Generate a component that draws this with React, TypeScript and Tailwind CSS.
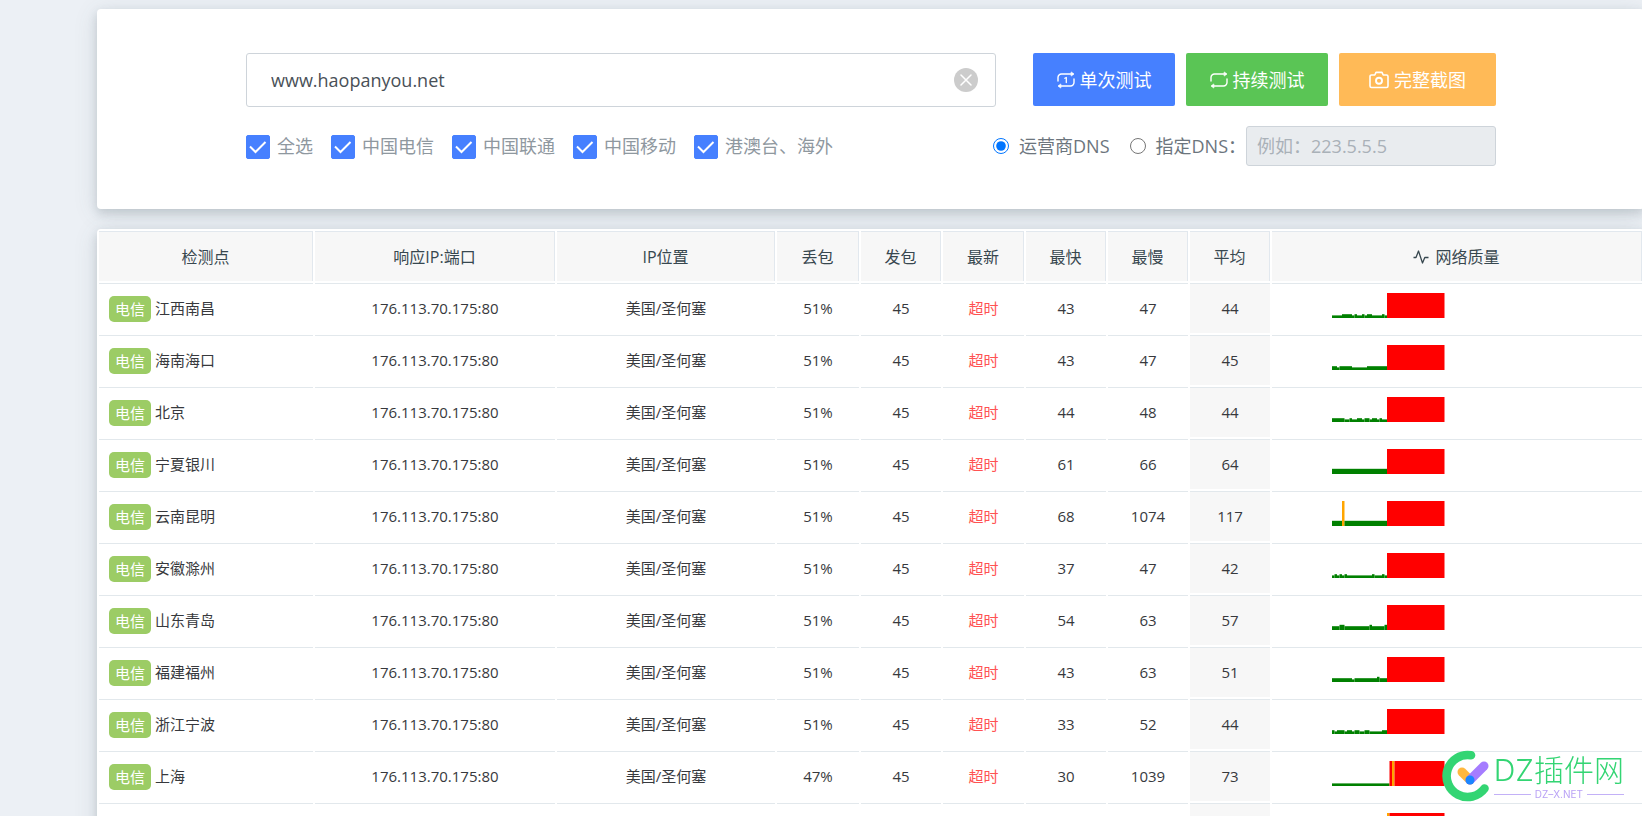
import { useState } from "react";

const carriers = ["全选", "中国电信", "中国联通", "中国移动", "港澳台、海外"];

// One character per probe: a/b/c are answered (low to high), o is slow, x is lost.
const levels: Record<string, { height: number; color: string }> = {
  a: { height: 2.6, color: "green" },
  b: { height: 3.8, color: "green" },
  c: { height: 5.2, color: "green" },
  o: { height: 25, color: "orange" },
  x: { height: 25, color: "red" },
};

const LOST = "xxxxxxxxxxxxxxxxxxxxxxx";

const rows = [
  { city: "江西南昌", loss: "51%", sent: 45, min: 43, max: 47, avg: 44, probes: "aaaabbbbabaababbaaaaba" + LOST },
  { city: "海南海口", loss: "51%", sent: 45, min: 43, max: 47, avg: 45, probes: "bbabbbbbaaaaaabbbbbbbb" + LOST },
  { city: "北京", loss: "51%", sent: 45, min: 44, max: 48, avg: 44, probes: "bbbbbaabaabbabbabbabaa" + LOST },
  { city: "宁夏银川", loss: "51%", sent: 45, min: 61, max: 66, avg: 64, probes: "cccccccccccccccccccccc" + LOST },
  { city: "云南昆明", loss: "51%", sent: 45, min: 68, max: 1074, avg: 117, probes: "ccccoccccccccccccccccc" + LOST },
  { city: "安徽滁州", loss: "51%", sent: 45, min: 37, max: 47, avg: 42, probes: "abababaaaaaaaaaabaaaba" + LOST },
  { city: "山东青岛", loss: "51%", sent: 45, min: 54, max: 63, avg: 57, probes: "bbbccbbbbbbbbbbcbbbbbc" + LOST },
  { city: "福建福州", loss: "51%", sent: 45, min: 43, max: 63, avg: 51, probes: "bbbbbbbbabbbbbbbbbcbbb" + LOST },
  { city: "浙江宁波", loss: "51%", sent: 45, min: 33, max: 52, avg: 44, probes: "babbbabbabbaabbaaaaabb" + LOST },
  { city: "上海", loss: "47%", sent: 45, min: 30, max: 1039, avg: 73, probes: "aaaaaaaaaaaaaaaaaaaaaaaxoxxxxxxxxxxxxxxxxxxxx" },
  { city: "江苏苏州", loss: "49%", sent: 45, min: 31, max: 1040, avg: 75, probes: "aaaaaaaaaaaaaaaaaaaaaaoxxxxxxxxxxxxxxxxxxxxxx" },
];

function QualityChart({ probes }: { probes: string }) {
  // equal neighbours become one bar, so no seams show between them
  const runs = [...probes.matchAll(/(.)\1*/g)];
  return (
    <svg width="250" height="25" viewBox="0 0 250 25" className="mx-auto block">
      {runs.map((run) => {
        const { height, color } = levels[run[1]];
        return <rect key={run.index} x={run.index * 2.5} y={25 - height} width={run[0].length * 2.5} height={height} fill={color} />;
      })}
    </svg>
  );
}

function RepeatIcon({ once = false }: { once?: boolean }) {
  return (
    <svg width="18" height="18" viewBox="0 0 18 18" fill="none" stroke="currentColor" strokeWidth="1.4" strokeLinecap="round" strokeLinejoin="round">
      <path d="M1 10V6.500a3.500 3.500 0 0 1 3.500-3.500H16" />
      <path d="M17 8v3.500a3.500 3.500 0 0 1-3.500 3.500H2" />
      <path d="M14.500 1.200l2.300 1.800-2.300 1.800zM3.500 13.200L1.200 15l2.300 1.800z" fill="currentColor" strokeWidth="0.800" />
      {once && <path d="M7.800 7.300l1.500-.8v5" strokeWidth="1.300" />}
    </svg>
  );
}

function CameraIcon() {
  return (
    <svg width="20" height="18" viewBox="0 0 20 18" fill="none" stroke="currentColor" strokeWidth="1.6" strokeLinejoin="round">
      <path d="M2.500 4h3.300l1.200-2.600h6L14.200 4h3.300a1.500 1.500 0 0 1 1.500 1.500v9.500a1.500 1.500 0 0 1-1.500 1.500h-15A1.500 1.500 0 0 1 1 15V5.500A1.500 1.500 0 0 1 2.500 4z" />
      <circle cx="10" cy="9.800" r="3" strokeWidth="1.900" />
    </svg>
  );
}

function PulseIcon() {
  return (
    <svg width="16" height="16" viewBox="0 0 16 16" fill="none" stroke="currentColor" strokeWidth="1.3" strokeLinejoin="round">
      <path d="M0.500 8.500H3L5.500 2l4 12 2.300-5.500h3.700" />
    </svg>
  );
}

function Watermark() {
  return (
    <div className="pointer-events-none fixed right-[18px] bottom-3.5 flex items-center font-['Inter','Noto_Sans_CJK_SC',sans-serif]">
      <svg width="52" height="52" viewBox="0 0 52 52" fill="none" strokeLinecap="round">
        <path d="M29 5.300A21 21 0 1 0 42.500 38.500" stroke="#33d573" strokeWidth="8.600" />
        <path d="M20 22l8 8" stroke="#ffb83f" strokeWidth="9" />
        <path d="M28 30L42 16" stroke="#a57cff" strokeWidth="9" />
        <circle cx="28" cy="30" r="4.500" fill="#1a86ff" />
      </svg>
      <div>
        <div className="text-[30px] leading-9 font-light text-[#33d573]">DZ插件网</div>
        <div className="flex items-center gap-1 text-[10px] leading-3 text-[#b9a2f5]">
          <span className="h-px flex-1 bg-[#c3b1f7]" />
          DZ–X.NET
          <span className="h-px flex-1 bg-[#c3b1f7]" />
        </div>
      </div>
    </div>
  );
}

function SearchPanel() {
  const [host, setHost] = useState("www.haopanyou.net");
  const [dns, setDns] = useState("isp");

  return (
    <section className="flex gap-[37px] rounded bg-white pt-11 pr-[148px] pb-[43px] pl-[149px] shadow-[0_4px_10px_rgba(69,90,100,0.2),0_4px_24px_rgba(69,90,100,0.14)]">
      <div className="flex-1">
        <div className="relative">
          <input
            aria-label="域名"
            value={host}
            onChange={(e) => setHost(e.target.value)}
            className="block h-[54px] w-full rounded-[3px] border border-[#ced4da] px-6 text-lg text-[#495057] outline-none"
          />
          <button aria-label="清空" onClick={() => setHost("")} className="absolute top-[15px] right-[18px] h-6 w-6 rounded-full bg-[#ccc] p-1.5 text-white">
            <svg viewBox="0 0 12 12" stroke="currentColor" strokeWidth="1.5" strokeLinecap="round">
              <path d="M1 1l10 10M11 1L1 11" />
            </svg>
          </button>
        </div>
        <div className="mt-7 flex gap-[18px] text-lg leading-[22px] text-[#8f989f]">
          {carriers.map((name) => (
            <label key={name} className="flex gap-[7px] whitespace-nowrap">
              <span className="grid h-6 w-6">
                <input type="checkbox" defaultChecked className="peer col-start-1 row-start-1 appearance-none rounded-xs border border-[#4680ff] checked:bg-[#4680ff]" />
                <svg viewBox="0 0 24 24" fill="none" stroke="white" strokeWidth="2" className="pointer-events-none invisible col-start-1 row-start-1 peer-checked:visible">
                  <path d="M4 11.500l5.500 5.500L19.500 7" />
                </svg>
              </span>
              {name}
            </label>
          ))}
        </div>
      </div>

      <div className="w-[463px]">
        <div className="flex gap-[11px] text-lg text-white">
          <button className="flex h-[53px] w-[142px] items-center justify-center gap-[5px] rounded-xs bg-[#4680ff]">
            <RepeatIcon once />
            单次测试
          </button>
          <button className="flex h-[53px] w-[142px] items-center justify-center gap-[5px] rounded-xs bg-[#5ac555]">
            <RepeatIcon />
            持续测试
          </button>
          <button className="flex h-[53px] flex-1 items-center justify-center gap-[5px] rounded-xs bg-[#ffba57]">
            <CameraIcon />
            完整截图
          </button>
        </div>
        <div className="mt-5 flex items-center justify-end text-lg whitespace-nowrap text-[#6c757d]">
          <div className="flex shrink-0 gap-5">
            <label className="flex items-center gap-2.5">
              <input type="radio" name="dns" checked={dns === "isp"} onChange={() => setDns("isp")} className="h-4 w-4 shrink-0 accent-[#0075ff]" />
              运营商DNS
            </label>
            <label className="flex items-center gap-2.5">
              <input type="radio" name="dns" checked={dns === "custom"} onChange={() => setDns("custom")} className="h-4 w-4 shrink-0 accent-[#0075ff]" />
              指定DNS：
            </label>
          </div>
          <input
            aria-label="指定DNS"
            placeholder="例如：223.5.5.5"
            disabled={dns !== "custom"}
            className="h-10 w-[250px] shrink-0 rounded-[3px] border border-[#ced4da] px-2.5 text-lg placeholder:text-[#a9b1b8] disabled:bg-[#e9ecef]"
          />
        </div>
      </div>
    </section>
  );
}

const th = "h-[50px] border-t border-r border-[#e2e8ee] bg-[#f7f7f7] font-normal";
const td = "h-[50px] border-t border-[#e2e8ec]";

function ResultTable() {
  return (
    <section className="mt-5 rounded bg-white shadow-[0_4px_10px_rgba(69,90,100,0.2),0_4px_24px_rgba(69,90,100,0.14)]">
      <table className="w-full table-fixed border-separate border-spacing-0.5 text-center text-[15px] text-[#37393d]">
        <colgroup>
          <col className="w-[214px]" />
          <col className="w-[240px]" />
          <col className="w-[218px]" />
          <col className="w-[82px]" />
          <col className="w-[80px]" />
          <col className="w-[81px]" />
          <col className="w-[80px]" />
          <col className="w-[80px]" />
          <col className="w-[80px]" />
          <col />
        </colgroup>
        <thead className="text-base text-[#37474f]">
          <tr>
            <th className={th}>检测点</th>
            <th className={th}>响应IP:端口</th>
            <th className={th}>IP位置</th>
            <th className={th}>丢包</th>
            <th className={th}>发包</th>
            <th className={th}>最新</th>
            <th className={th}>最快</th>
            <th className={th}>最慢</th>
            <th className={th}>平均</th>
            <th className={th}>
              <span className="flex items-center justify-center gap-1.5">
                <PulseIcon />
                网络质量
              </span>
            </th>
          </tr>
        </thead>
        <tbody>
          {rows.map((row) => (
            <tr key={row.city}>
              <td className={td}>
                <div className="flex items-center gap-1 pl-2.5">
                  <span className="h-[26px] w-[42px] rounded-[5px] bg-[#9ccc65] leading-[26px] text-white">电信</span>
                  {row.city}
                </div>
              </td>
              <td className={td}>176.113.70.175:80</td>
              <td className={td}>美国/圣何塞</td>
              <td className={td}>{row.loss}</td>
              <td className={td}>{row.sent}</td>
              <td className={`${td} text-[#ff5252]`}>超时</td>
              <td className={td}>{row.min}</td>
              <td className={td}>{row.max}</td>
              <td className={`${td} bg-[#f7f7f7]`}>{row.avg}</td>
              <td className={`${td} pt-[9px] align-top`}>
                <QualityChart probes={row.probes} />
              </td>
            </tr>
          ))}
        </tbody>
      </table>
    </section>
  );
}

export default function App() {
  return (
    <div className="min-h-screen overflow-hidden bg-[#ecf0f5] font-['Open_Sans','Noto_Sans_CJK_SC',sans-serif]">
      <main className="mt-[9px] -mr-0.5 ml-[97px]">
        <SearchPanel />
        <ResultTable />
      </main>
      <Watermark />
    </div>
  );
}
